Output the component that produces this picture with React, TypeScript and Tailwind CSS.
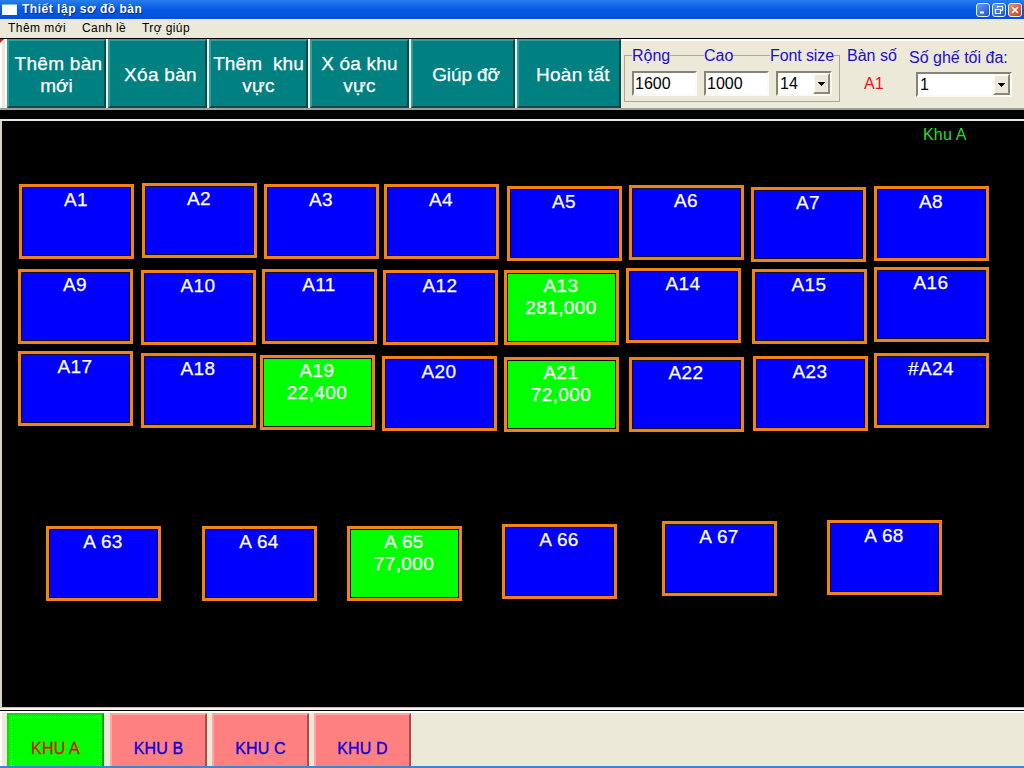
import React from "react";

type Table = { name: string; x: number; y: number; total?: string };

const tables: Table[] = [
  { name: "A1", x: 19, y: 184 },
  { name: "A2", x: 142, y: 183 },
  { name: "A3", x: 264, y: 184 },
  { name: "A4", x: 384, y: 184 },
  { name: "A5", x: 507, y: 186 },
  { name: "A6", x: 629, y: 185 },
  { name: "A7", x: 751, y: 187 },
  { name: "A8", x: 874, y: 186 },
  { name: "A9", x: 18, y: 269 },
  { name: "A10", x: 141, y: 270 },
  { name: "A11", x: 262, y: 269 },
  { name: "A12", x: 383, y: 270 },
  { name: "A13", x: 504, y: 270, total: "281,000" },
  { name: "A14", x: 626, y: 268 },
  { name: "A15", x: 752, y: 269 },
  { name: "A16", x: 874, y: 267 },
  { name: "A17", x: 18, y: 351 },
  { name: "A18", x: 141, y: 353 },
  { name: "A19", x: 260, y: 355, total: "22,400" },
  { name: "A20", x: 382, y: 356 },
  { name: "A21", x: 504, y: 357, total: "72,000" },
  { name: "A22", x: 629, y: 357 },
  { name: "A23", x: 753, y: 356 },
  { name: "#A24", x: 874, y: 353 },
  { name: "A 63", x: 46, y: 526 },
  { name: "A 64", x: 202, y: 526 },
  { name: "A 65", x: 347, y: 526, total: "77,000" },
  { name: "A 66", x: 502, y: 524 },
  { name: "A 67", x: 662, y: 521 },
  { name: "A 68", x: 827, y: 520 },
];

// Top of the floor plan inside the window; table coordinates are window based.
const PLAN_TOP = 121;
const PLAN_LEFT = 2;

function TableTile({ name, x, y, total }: Table) {
  return (
    <div
      className="absolute h-[75px] w-[115px] border-[3px] border-[#f08218]"
      style={{ left: x - PLAN_LEFT, top: y - PLAN_TOP }}
    >
      <div
        className={`h-full border border-[#10102a] pt-px text-center text-[19px] leading-[22px] tracking-[0.4px] text-white [-webkit-text-stroke:0.25px] ${
          total ? "bg-[#00ff00] pr-px" : "bg-[#0000ff] pr-px"
        }`}
      >
        <div>{name}</div>
        {total && <div>{total}</div>}
      </div>
    </div>
  );
}

function ToolButton({ width, pad, lines }: { width: string; pad: string; lines: { text: string; track: string }[] }) {
  return (
    <button
      className={`flex h-[69px] shrink-0 flex-col items-center justify-center border-2 border-t-[#3a9c98] border-l-[#3a9c98] border-r-[#0b4a4a] border-b-[#0b4a4a] bg-[#008080] pt-[2px] text-[19px] leading-[22px] text-white [-webkit-text-stroke:0.25px] ${width} ${pad}`}
    >
      {lines.map((l) => (
        <span key={l.text} className={`whitespace-pre ${l.track}`}>
          {l.text}
        </span>
      ))}
    </button>
  );
}

const sunken = "border-2 border-t-[#85837a] border-l-[#85837a] border-r-[#fbfaf5] border-b-[#fbfaf5] bg-white text-black";

function DropArrow() {
  return (
    <span className="flex h-full w-[17px] shrink-0 items-center justify-center border-2 border-t-[#fbfaf5] border-l-[#fbfaf5] border-r-[#8a887c] border-b-[#8a887c] bg-[#ece9d8]">
      <svg width="7" height="4" viewBox="0 0 7 4" shapeRendering="crispEdges">
        <path d="M0 0h7L3.5 4z" fill="#000" />
      </svg>
    </span>
  );
}

function WindowButton({ kind }: { kind: "min" | "restore" | "close" }) {
  return (
    <span
      className={`flex h-[14px] w-[14px] items-center justify-center rounded-[3px] border border-[#e4eefc] ${
        kind === "close"
          ? "bg-linear-to-br from-[#ea8c70] to-[#c63a12]"
          : "bg-linear-to-br from-[#6a9af5] to-[#1b4fd0]"
      }`}
    >
      <svg width="12" height="12" viewBox="0 0 12 12" fill="none" stroke="#fff" className="shrink-0">
        {kind === "min" && <path d="M3 8.5H7" strokeWidth="2" />}
        {kind === "restore" && (
          <>
            <path d="M4.5 4V2.5h5v4H8" strokeWidth="1.2" />
            <path d="M2.5 5.5h5v4h-5z" strokeWidth="1.2" />
          </>
        )}
        {kind === "close" && <path d="M3 3l6 6M9 3l-6 6" strokeWidth="1.7" />}
      </svg>
    </span>
  );
}

function AreaTab({ label, active }: { label: string; active?: boolean }) {
  return (
    <button
      className={`h-[53px] w-[97px] shrink-0 border-t-2 border-r-2 border-l-2 text-[16px] tracking-[0.15px] ${
        active
          ? "mr-px border-t-[#10d810] border-r-[#0b9c0b] border-l-[#10d810] bg-[#00ff00] p-[2px] pb-0 text-[#c8200a]"
          : "border-t-[#ffa8a2] border-r-[#b04a4a] border-l-[#ffa8a2] bg-[#ff8080] px-[2px] pt-[2px] text-[#0a00d8]"
      }`}
    >
      <span
        className={`flex h-[49px] items-center justify-center border border-b-0 border-dotted pt-[14px] [-webkit-text-stroke:0.35px] ${
          active ? "border-[#d8ff90]" : "border-transparent"
        }`}
      >
        {label}
      </span>
    </button>
  );
}

export default function App() {
  return (
    <div className="flex h-[768px] w-[1024px] flex-col overflow-hidden bg-black font-['Liberation_Sans',Arial,sans-serif]">
      <header className="flex h-[19px] shrink-0 items-center justify-between bg-linear-to-b from-[#2a7cf0] via-[#0458e8] to-[#0450d4] pr-[2px] pl-[2px]">
        <div className="flex items-center">
          <span className="mr-[5px] block h-[11px] w-[15px] border-t border-[#8ab0ff] bg-white" />
          <h1 className="text-[12px] leading-[19px] font-bold tracking-[0.52px] whitespace-nowrap text-white [text-shadow:1px_1px_0_#0a2a80]">
            Thiết lập sơ đồ bàn
          </h1>
        </div>
        <div className="flex gap-[2px]">
          <WindowButton kind="min" />
          <WindowButton kind="restore" />
          <WindowButton kind="close" />
        </div>
      </header>

      <nav className="flex h-[19px] shrink-0 items-start bg-[#ece9d8] pl-2 text-[12px] leading-[18px] whitespace-nowrap text-black">
        <span className="w-[74px] tracking-[0.45px]">Thêm mới</span>
        <span className="w-[60px] tracking-[0.4px]">Canh lề</span>
        <span className="tracking-[0.4px]">Trợ giúp</span>
      </nav>

      <section className="flex h-[72px] shrink-0 border-t border-b-2 border-t-black border-b-[#a09d92] bg-[#ece9d8]">
        <div className="w-[7px] shrink-0 border-r-2 border-l-2 border-l-white border-r-white">
          <svg width="4" height="4" viewBox="0 0 4 4" className="-ml-[2px]">
            <path d="M0 0h4L0 4z" fill="#e01010" />
          </svg>
        </div>
        <div className="flex shrink-0 gap-[2px] bg-[#eaf6f0]">
          <ToolButton width="w-[99px]" pad="pl-[4px]" lines={[{ text: "Thêm bàn", track: "tracking-[0.3px]" }, { text: "mới", track: "pr-[4px]" }]} />
          <ToolButton width="w-[99px]" pad="pl-[6px]" lines={[{ text: "Xóa bàn", track: "tracking-[0.3px]" }]} />
          <ToolButton width="w-[99px]" pad="" lines={[{ text: "Thêm  khu", track: "tracking-[0.1px]" }, { text: "vực", track: "tracking-[0.2px]" }]} />
          <ToolButton width="w-[99px]" pad="" lines={[{ text: "X óa khu", track: "tracking-[0.2px]" }, { text: "vực", track: "tracking-[0.2px]" }]} />
          <ToolButton width="w-[104px]" pad="pl-[6px]" lines={[{ text: "Giúp đỡ", track: "-tracking-[0.1px]" }]} />
          <ToolButton width="w-[104px]" pad="pl-[8px]" lines={[{ text: "Hoàn tất", track: "tracking-[0.25px]" }]} />
        </div>

        <div className="flex min-w-0 flex-1 border-t-2 border-white pl-[3px] text-[16px] leading-[18px] whitespace-nowrap text-[#1a10c8]">
          <fieldset className="mt-[14px] flex h-[47px] w-[216px] shrink-0 border border-[#aca899] pl-[7px]">
            <label className="-mt-[9px] flex h-[52px] w-[72px] flex-col gap-[6px]">
              <span className="self-start bg-[#ece9d8]">Rộng</span>
              <span className={`flex h-[25px] w-[65px] items-center pt-px pl-px ${sunken}`}>1600</span>
            </label>
            <label className="-mt-[9px] flex h-[52px] w-[72px] flex-col gap-[6px]">
              <span className="self-start bg-[#ece9d8]">Cao</span>
              <span className={`flex h-[25px] w-[65px] items-center pt-px pl-px ${sunken}`}>1000</span>
            </label>
            <label className="-mt-[9px] flex h-[52px] w-[56px] flex-col gap-[6px]">
              <span className="-ml-[6px] self-start bg-[#ece9d8] tracking-[-0.1px]">Font size</span>
              <span className={`flex h-[25px] w-[56px] items-center justify-between pl-[2px] ${sunken}`}>
                <span className="pt-px">14</span>
                <DropArrow />
              </span>
            </label>
          </fieldset>
          <div className="flex w-[69px] shrink-0 flex-col gap-[10px] pt-[6px] pl-[7px]">
            <span>Bàn số</span>
            <span className="pl-[17px] text-[#e01818]">A1</span>
          </div>
          <div className="flex flex-col gap-[5px] pt-[8px]">
            <span>Số ghế tối đa:</span>
            <span className={`ml-[7px] flex h-[25px] w-[96px] items-center justify-between pl-[2px] ${sunken}`}>
              <span className="pt-px">1</span>
              <DropArrow />
            </span>
          </div>
        </div>
      </section>

      <div className="h-[9px] shrink-0 bg-black" />

      <main className="relative h-[588px] shrink-0 border-t-2 border-l-2 border-t-[#e8e8e8] border-l-[#d8d5c8] bg-black">
        <span className="absolute top-[5px] left-[921px] text-[16px] leading-[18px] tracking-[0.2px] whitespace-nowrap text-[#28dc28]">Khu A</span>
        {tables.map((t) => (
          <TableTile key={t.name} {...t} />
        ))}
      </main>

      <footer className="flex h-[61px] shrink-0 flex-col border-b-2 border-[#3c84dc] bg-[#ece9d8]">
        <div className="h-[3px] shrink-0 border-t border-[#c8c4b4] bg-[#f6f4ec]" />
        <div className="h-px shrink-0 bg-black" />
        <div className="h-[2px] shrink-0 bg-white" />
        <div className="flex h-[53px] gap-[5px] border-l-2 border-white pl-[5px]">
          <AreaTab label="KHU A" active />
          <AreaTab label="KHU B" />
          <AreaTab label="KHU C" />
          <AreaTab label="KHU D" />
        </div>
      </footer>
    </div>
  );
}
